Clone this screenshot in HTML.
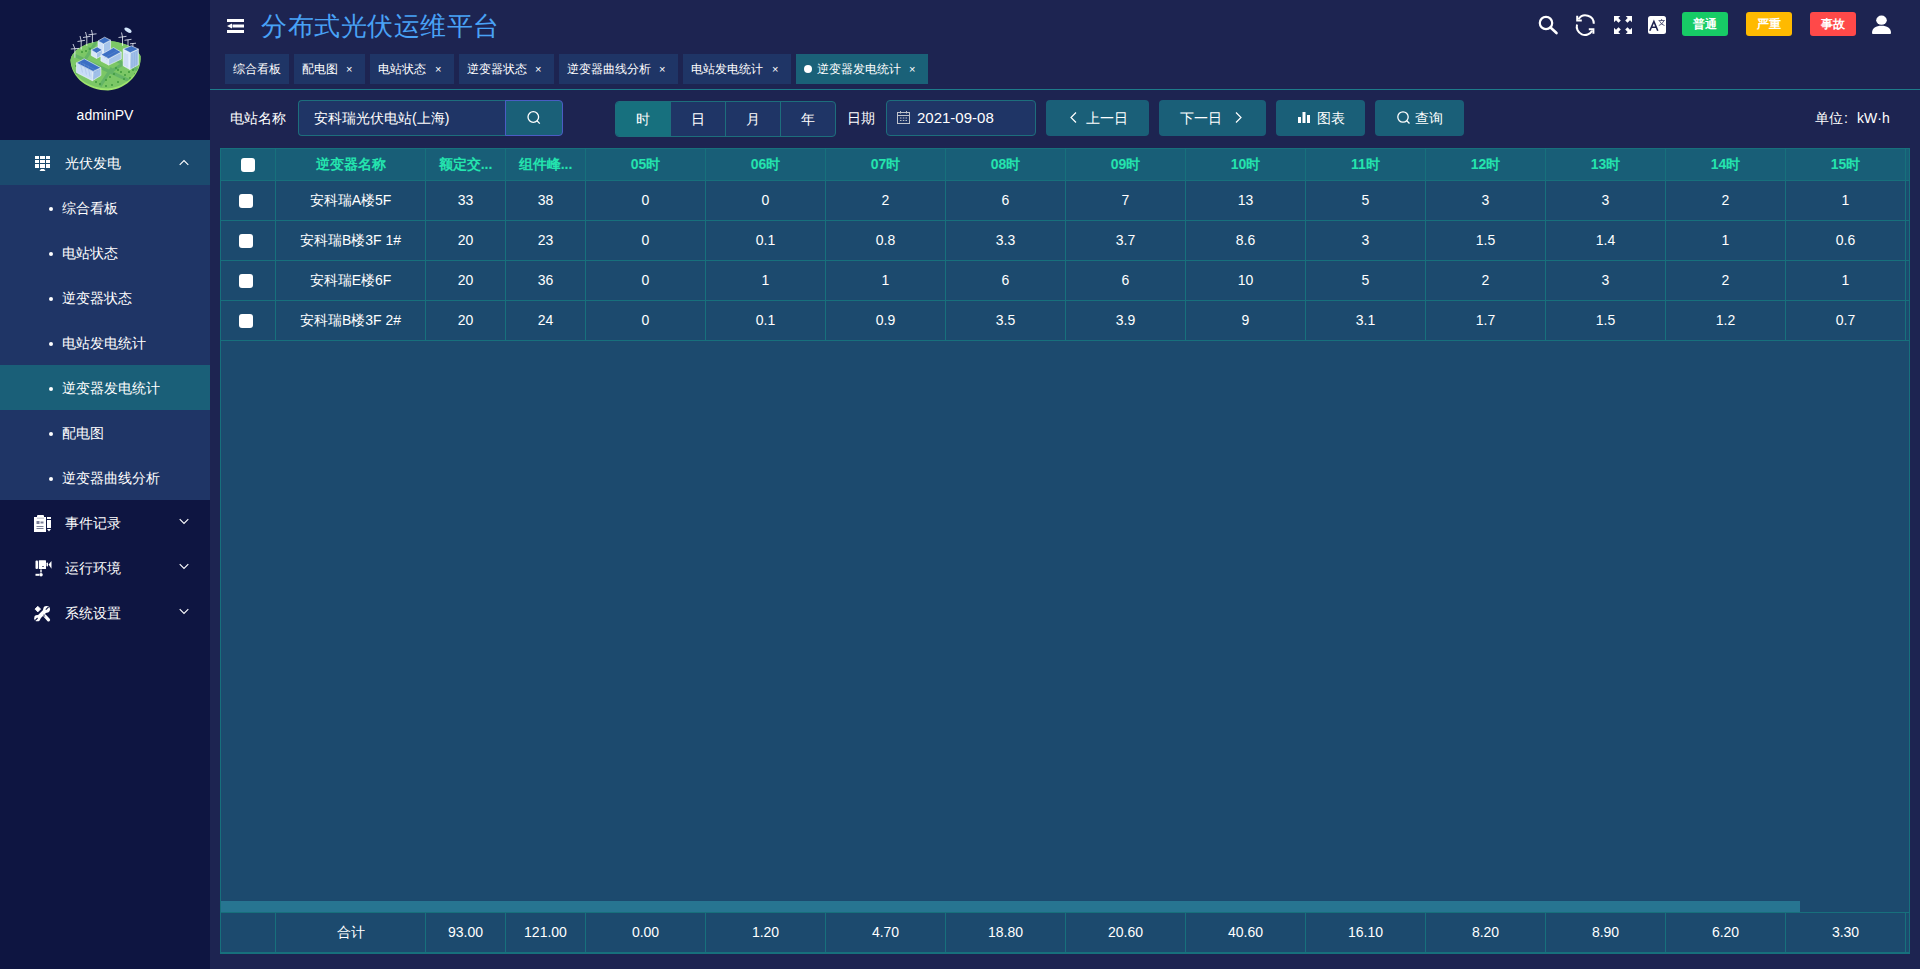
<!DOCTYPE html>
<html><head><meta charset="utf-8"><style>
*{box-sizing:border-box;margin:0;padding:0}
html,body{width:1920px;height:969px;overflow:hidden;background:#1d2451;font-family:"Liberation Sans",sans-serif;color:#fff}
.a{position:absolute}
svg{position:absolute;overflow:visible}
.txt{position:absolute;white-space:nowrap;font-size:14px;line-height:20px}
.m{position:absolute;left:0;width:210px;height:45px;font-size:14px;line-height:45px}
.m .t{position:absolute;left:65px;top:1px}
.sub{position:absolute;left:0;width:210px;height:45px;font-size:14px;line-height:45px;background:#1f3566}
.sub .dot{position:absolute;left:49px;top:22px;width:4px;height:4px;border-radius:50%;background:#fff}
.sub .t{position:absolute;left:62px;top:1px}
.sub.act{background:#1a5f78}
.tab{position:absolute;top:54px;height:30px;background:#1f3566;font-size:12px;line-height:30px;padding-left:8px;white-space:nowrap}
.tab .x{position:absolute;top:0;font-size:11px}
.tab.act{background:#1a6178}
.btn{position:absolute;top:100px;height:36px;background:#1a5f78;border-radius:4px;font-size:14px;line-height:36px;white-space:nowrap}
.cell{position:absolute;text-align:center;font-size:14px;white-space:nowrap;padding-left:1px}
.hd{color:#24e4ae;font-weight:bold;font-size:14px}
.vl{position:absolute;width:1px;background:#17707c}
.hl{position:absolute;height:1px;background:#17707c}
.cb{position:absolute;width:14px;height:14px;background:#fff;border-radius:3px}
.badge{position:absolute;top:12px;width:46px;height:24px;border-radius:3px;font-size:12px;line-height:25px;text-align:center;font-weight:bold}
</style></head><body>
<div class="a" style="left:0;top:0;width:210px;height:969px;background:#0e1541"></div>
<svg style="left:66px;top:22px" width="78" height="72" viewBox="0 0 78 72">
<path d="M4.5 38 C6 28 20 20 36 19 C52 18 70 24 74.5 34 C76 50 62 67 42 68.5 C22 68.5 5 56 4.5 38Z" fill="#9ee46e"/>
<path d="M4.5 38 C6 28 20 20 36 19 C52 18 70 24 74.5 34 C75.5 49 61 65 42 66.5 C23 66.5 6 55 4.5 38Z" fill="#7cc766"/>
<clipPath id="isl"><path d="M4.5 38 C6 28 20 20 36 19 C52 18 70 24 74.5 34 C75.5 49 61 65 42 66.5 C23 66.5 6 55 4.5 38Z"/></clipPath><g clip-path="url(#isl)"><path d="M8 33 L66 60 M30 20 L10 52 M46 46 L34 64 M60 40 L44 50 M22 26 L72 48" stroke="#64b466" stroke-width="3.2" fill="none"/>
<circle cx="10" cy="44" r="1" fill="#3f9a3c"/><circle cx="14" cy="47" r="1" fill="#3f9a3c"/><circle cx="18" cy="50" r="1" fill="#3f9a3c"/><circle cx="22" cy="53" r="1" fill="#3f9a3c"/><circle cx="27" cy="56" r="1" fill="#3f9a3c"/><circle cx="30" cy="60" r="1" fill="#3f9a3c"/><circle cx="34" cy="62" r="1" fill="#3f9a3c"/><circle cx="40" cy="58" r="1" fill="#3f9a3c"/><circle cx="44" cy="55" r="1" fill="#3f9a3c"/><circle cx="48" cy="52" r="1" fill="#3f9a3c"/><circle cx="52" cy="48" r="1" fill="#3f9a3c"/><circle cx="50" cy="46" r="1" fill="#3f9a3c"/><circle cx="55" cy="50" r="1" fill="#3f9a3c"/><circle cx="59" cy="53" r="1" fill="#3f9a3c"/><circle cx="63" cy="50" r="1" fill="#3f9a3c"/><circle cx="67" cy="48" r="1" fill="#3f9a3c"/><circle cx="58" cy="57" r="1" fill="#3f9a3c"/><circle cx="52" cy="60" r="1" fill="#3f9a3c"/><circle cx="46" cy="63" r="1" fill="#3f9a3c"/><circle cx="40" cy="64" r="1" fill="#3f9a3c"/><circle cx="64" cy="56" r="1" fill="#3f9a3c"/><circle cx="69" cy="52" r="1" fill="#3f9a3c"/><circle cx="16" cy="30" r="1" fill="#3f9a3c"/><circle cx="20" cy="29" r="1" fill="#3f9a3c"/><circle cx="24" cy="27" r="1" fill="#3f9a3c"/></g>
<g stroke="#f4f8ff" stroke-width="0.6" stroke-linejoin="round">
<path d="M10.4 40.9 L27.1 49.4 L26.4 58.7 L10.4 50.5Z" fill="#c9ddf6"/>
<path d="M27.1 49.4 L34.9 45.7 L34.9 53.5 L26.4 58.7Z" fill="#9fbfe8"/>
<path d="M10.4 40.9 L18.2 36.8 L34.9 45.7 L27.1 49.4Z" fill="#3b6fc4"/>
<path d="M32 19 L37.5 21.9 L37.5 33 L32 30Z" fill="#cfe1f8"/>
<path d="M37.5 21.9 L44.6 18.2 L44.6 30 L37.5 33Z" fill="#a6c4ea"/>
<path d="M32 19 L38.6 15.2 L44.6 18.2 L37.5 21.9Z" fill="#3b6fc4"/>
<path d="M25.3 27.9 L30.5 31.2 L30.5 36.4 L25.3 33.5Z" fill="#d6e6fa"/>
<path d="M30.5 31.2 L36.4 27.9 L36.4 33.5 L30.5 36.4Z" fill="#a6c4ea"/>
<path d="M25.3 27.9 L31.2 24.9 L36.4 27.9 L30.5 31.2Z" fill="#3b6fc4"/>
<path d="M34.9 32.7 L42.7 36.8 L42.7 43.1 L34.9 39Z" fill="#d6e6fa"/>
<path d="M42.7 36.8 L55.3 30.1 L55.3 37.1 L42.7 43.1Z" fill="#a6c4ea"/>
<path d="M34.9 32.7 L47.5 25.6 L55.3 30.1 L42.7 36.8Z" fill="#3b6fc4"/>
<path d="M57.2 27.1 L64.3 30.8 L63.9 47.5 L57.2 43.8Z" fill="#dbe9fb"/>
<path d="M64.3 30.8 L72.4 27.1 L72.4 42.7 L63.9 47.5Z" fill="#9fbfe8"/>
<path d="M57.2 27.1 L65.4 23.8 L72.4 27.1 L64.3 30.8Z" fill="#3b6fc4"/>
</g>
<g stroke="#eef3fa" stroke-width="0.8" fill="none">
<path d="M8.9 35.7 L8.9 26.7 M4.8 27 L13 26.4 M8.9 26.7 L7 22"/>
<path d="M15.2 27.5 L15.2 18.9 M11.5 19.5 L19 18.3 M15.2 18.9 L14 14"/>
<path d="M20.8 23.8 L20.8 14.9 M17 15.5 L24.5 14.3 M20.8 14.9 L19.5 10"/>
<path d="M26.4 20.8 L26.4 12.3 M22.5 12.8 L30.5 11.8 M26.4 12.3 L25.5 8"/>
<path d="M56.5 23.8 L56.5 14.9 M52.5 15.5 L60.5 14.3 M56.5 14.9 L55.5 10.5"/>
<path d="M62 23.8 L62 17.8 M58.5 18.3 L65.5 17.3"/>
<path d="M66.9 24.5 L66.9 21.5 M64 21.8 L70 21.2"/>
</g>
<ellipse cx="62" cy="8.2" rx="4" ry="1.9" fill="#d3e6fb" transform="rotate(32 62 8.2)"/>
<g stroke="#7fa3da" stroke-width="0.35" fill="none" opacity="0.8">
<path d="M13 42.2 L29.5 50.5 M15.5 40.9 L32 49.2 M14 39.5 L16.5 50.5 M18 41.5 L20.5 52.5 M22 43.5 L24 54.5"/>
<path d="M59 31 L59 44 M61 32 L61 45.5 M66 31 L66 47 M68.5 30 L68.5 45.5 M70.5 29 L70.5 44"/>
<path d="M38 36 L51 29 M40 37.5 L53 30.5"/>
</g>
</svg>
<div class="txt" style="left:0;width:210px;top:105px;text-align:center">adminPV</div>
<div class="m" style="top:140px;background:#1b4a6e"><span class="t">光伏发电</span></div>
<svg style="left:35px;top:156px" width="15" height="15" viewBox="0 0 15 15" fill="#fff">
<rect x="0" y="0" width="4" height="3"/><rect x="5" y="0" width="5" height="3"/><rect x="11" y="0" width="4" height="3"/>
<rect x="0" y="4" width="4" height="3"/><rect x="5" y="4" width="5" height="3"/><rect x="11" y="4" width="4" height="3"/>
<rect x="0" y="8" width="4" height="4"/><rect x="5" y="8" width="5" height="4"/><rect x="11" y="8" width="4" height="4"/>
<path d="M6 13 L9 13 L10.5 15 L4.5 15Z"/></svg>
<svg style="left:179px;top:159px" width="10" height="7" viewBox="0 0 10 7"><path d="M0.7 5.8 L5 1.5 L9.3 5.8" stroke="#fff" stroke-width="1.1" fill="none"/></svg>
<div class="sub" style="top:185px"><i class="dot"></i><span class="t">综合看板</span></div>
<div class="sub" style="top:230px"><i class="dot"></i><span class="t">电站状态</span></div>
<div class="sub" style="top:275px"><i class="dot"></i><span class="t">逆变器状态</span></div>
<div class="sub" style="top:320px"><i class="dot"></i><span class="t">电站发电统计</span></div>
<div class="sub act" style="top:365px"><i class="dot"></i><span class="t">逆变器发电统计</span></div>
<div class="sub" style="top:410px"><i class="dot"></i><span class="t">配电图</span></div>
<div class="sub" style="top:455px"><i class="dot"></i><span class="t">逆变器曲线分析</span></div>
<div class="m" style="top:500px"><span class="t">事件记录</span></div>
<svg style="left:179px;top:518px" width="10" height="7" viewBox="0 0 10 7"><path d="M0.7 1.2 L5 5.5 L9.3 1.2" stroke="#fff" stroke-width="1.1" fill="none"/></svg>
<div class="m" style="top:545px"><span class="t">运行环境</span></div>
<svg style="left:179px;top:563px" width="10" height="7" viewBox="0 0 10 7"><path d="M0.7 1.2 L5 5.5 L9.3 1.2" stroke="#fff" stroke-width="1.1" fill="none"/></svg>
<div class="m" style="top:590px"><span class="t">系统设置</span></div>
<svg style="left:179px;top:608px" width="10" height="7" viewBox="0 0 10 7"><path d="M0.7 1.2 L5 5.5 L9.3 1.2" stroke="#fff" stroke-width="1.1" fill="none"/></svg>
<svg style="left:34px;top:515px" width="17" height="17" viewBox="0 0 17 17" fill="#fff">
<path d="M0 2 L3 2 L3 1 Q3 0 4 0 L9 0 Q10 0 10 1 L10 2 L12 2 L12 17 L0 17Z"/>
<rect x="2.5" y="6" width="3" height="3" fill="#0e1541" opacity="0.55"/><rect x="6.5" y="6.5" width="3" height="2" fill="#0e1541" opacity="0.55"/>
<rect x="2.5" y="11" width="7" height="1" fill="#0e1541" opacity="0.55"/><rect x="2.5" y="13" width="7" height="1" fill="#0e1541" opacity="0.55"/>
<path d="M3 3.2 L10 3.2" stroke="#0e1541" stroke-width="0.6" opacity="0.5"/>
<rect x="13" y="2" width="4" height="2"/><rect x="13" y="5" width="4" height="8"/><path d="M13 14 L17 14 L15 16.5Z"/></svg>
<svg style="left:35px;top:560px" width="17" height="17" viewBox="0 0 17 17" fill="#fff">
<rect x="0.5" y="0.5" width="2.5" height="8.5" rx="1"/><rect x="3.8" y="0.3" width="7.2" height="8.7" rx="0.5"/>
<rect x="7" y="6" width="2" height="1" fill="#0e1541" opacity="0.6"/>
<rect x="11.5" y="2.5" width="1.5" height="4" rx="0.7"/><path d="M13.5 4.5 L16.5 1 L16.5 8.7Z"/>
<rect x="5.3" y="9.5" width="1.4" height="3"/><circle cx="6" cy="14.8" r="1.8"/><rect x="0.5" y="13.8" width="3.5" height="2"/></svg>
<svg style="left:34px;top:605px" width="16" height="17" viewBox="0 0 16 17">
<path d="M3.8 1.3 L6.6 4.1 L3.8 6.9 L1 4.1Z" fill="#fff" stroke="#fff" stroke-width="0.8" stroke-linejoin="round"/>
<path d="M3 14 L12.5 4.5" stroke="#fff" stroke-width="4" stroke-linecap="round"/>
<circle cx="12.6" cy="4.3" r="3.4" fill="#fff"/><circle cx="3.3" cy="13.2" r="3.1" fill="#fff"/>
<path d="M14.6 1.8 L11.8 4.6" stroke="#0e1541" stroke-width="1.1"/>
<path d="M1 15.6 L3.6 13" stroke="#0e1541" stroke-width="1.1"/>
<path d="M11 11 L14.5 14.8" stroke="#fff" stroke-width="3.2" stroke-linecap="round"/>
<path d="M9.5 10 L11.2 11.6" stroke="#0e1541" stroke-width="0.9"/>
</svg>
<svg style="left:227px;top:19px" width="17" height="14" viewBox="0 0 17 14" fill="#fff">
<rect x="0" y="0" width="17" height="3"/><rect x="5.5" y="5.5" width="11.5" height="3"/><rect x="0" y="11" width="17" height="3"/>
<path d="M0 7 L5 4.5 L5 9.5Z"/></svg>
<div class="txt" style="left:261px;top:8px;font-size:26px;letter-spacing:0.5px;line-height:36px;color:#49a2f6">分布式光伏运维平台</div>
<svg style="left:1538px;top:15px" width="20" height="20" viewBox="0 0 20 20"><circle cx="8" cy="8" r="6.2" stroke="#fff" stroke-width="2.2" fill="none"/><path d="M12.5 12.5 L18.5 18" stroke="#fff" stroke-width="2.6" stroke-linecap="round"/></svg>
<svg style="left:1575px;top:14px" width="21" height="21" viewBox="0 0 21 21" fill="none" stroke="#fff" stroke-width="2">
<path d="M3.5 5.2 A8.3 8.3 0 0 1 18.8 9.8"/><path d="M17.2 16.8 A8.3 8.3 0 0 1 2 10.5"/>
<path d="M2.2 1.8 L2.2 6.4 L6.8 6.4" stroke-width="2"/><path d="M18.4 19.8 L18.4 15.2 L13.8 15.2" stroke-width="2"/></svg>
<svg style="left:1614px;top:16px" width="18" height="18" viewBox="0 0 18 18" fill="#fff">
<path d="M0 0 L6.3 0 L4.3 2 L6.8 4.5 L4.5 6.8 L2 4.3 L0 6.3Z"/>
<path d="M18 0 L11.7 0 L13.7 2 L11.2 4.5 L13.5 6.8 L16 4.3 L18 6.3Z"/>
<path d="M0 18 L6.3 18 L4.3 16 L6.8 13.5 L4.5 11.2 L2 13.7 L0 11.7Z"/>
<path d="M18 18 L11.7 18 L13.7 16 L11.2 13.5 L13.5 11.2 L16 13.7 L18 11.7Z"/></svg>
<svg style="left:1648px;top:16px" width="18" height="18" viewBox="0 0 18 18">
<rect x="0" y="0" width="18" height="18" rx="2.5" fill="#fff"/>
<path d="M1.8 14.8 L5.9 5.5 L9.8 14.8 M3.3 11.3 L8.4 11.3" stroke="#1e2350" stroke-width="1.6" fill="none"/>
<path d="M10.5 4.5 L16.8 4.5 M13.6 3 L13.6 4.5 M11.5 5 Q13.5 9 16.5 9.5 M15.8 5 Q13.8 9 10.8 9.5" stroke="#1e2350" stroke-width="0.7" fill="none"/></svg>
<div class="badge" style="left:1682px;background:#17cc66">普通</div>
<div class="badge" style="left:1746px;background:#ffba00">严重</div>
<div class="badge" style="left:1810px;background:#ff4949">事故</div>
<svg style="left:1872px;top:15px" width="19" height="20" viewBox="0 0 19 20" fill="#fff">
<ellipse cx="9.5" cy="5.2" rx="5.3" ry="4.6"/><path d="M0 18 C0 13 4 10.8 9.5 10.8 C15 10.8 19 13 19 18 Q19 19 18 19 L1 19 Q0 19 0 18Z"/></svg>
<div class="tab" style="left:225px;width:64px">综合看板</div>
<div class="tab" style="left:294px;width:71px">配电图<span class="x" style="left:52px">×</span></div>
<div class="tab" style="left:370px;width:84px">电站状态<span class="x" style="left:65px">×</span></div>
<div class="tab" style="left:459px;width:95px">逆变器状态<span class="x" style="left:76px">×</span></div>
<div class="tab" style="left:559px;width:119px">逆变器曲线分析<span class="x" style="left:100px">×</span></div>
<div class="tab" style="left:683px;width:108px">电站发电统计<span class="x" style="left:89px">×</span></div>
<div class="tab act" style="left:796px;width:132px;padding-left:21px"><i class="a" style="left:8px;top:11px;width:8px;height:8px;border-radius:50%;background:#fff"></i>逆变器发电统计<span class="x" style="left:113px">×</span></div>
<div class="a" style="left:210px;top:89px;width:1710px;height:1px;background:#1e7b8a"></div>
<div class="txt" style="left:230px;top:108px">电站名称</div>
<div class="a" style="left:298px;top:100px;width:208px;height:36px;background:#1f3566;border:1px solid #1d6e7c;border-right:none;border-radius:4px 0 0 4px;font-size:14px;line-height:34px;padding-left:15px;white-space:nowrap">安科瑞光伏电站(上海)</div>
<div class="a" style="left:505px;top:100px;width:58px;height:36px;background:#1a6078;border:1px solid #4b5cc4;border-radius:0 4px 4px 0"></div>
<svg style="left:527px;top:111px" width="14" height="14" viewBox="0 0 14 14" fill="none" stroke="#fff" stroke-width="1.3"><circle cx="6.3" cy="6" r="5.3"/><path d="M10 9.8 L12.8 12.6"/></svg>
<div class="a" style="left:615px;top:101px;width:221px;height:36px;background:#1f3566;border:1px solid #1d6e7c;border-radius:4px;overflow:hidden"><div class="a" style="left:0;top:0;width:55px;height:34px;background:#17707e"></div></div>
<i class="a" style="left:670px;top:102px;width:1px;height:34px;background:#1d6e7c"></i>
<i class="a" style="left:725px;top:102px;width:1px;height:34px;background:#1d6e7c"></i>
<i class="a" style="left:780px;top:102px;width:1px;height:34px;background:#1d6e7c"></i>
<div class="txt" style="left:615px;width:55px;top:109px;text-align:center">时</div>
<div class="txt" style="left:670px;width:55px;top:109px;text-align:center">日</div>
<div class="txt" style="left:725px;width:55px;top:109px;text-align:center">月</div>
<div class="txt" style="left:780px;width:55px;top:109px;text-align:center">年</div>
<div class="txt" style="left:847px;top:108px">日期</div>
<div class="a" style="left:886px;top:100px;width:150px;height:36px;background:#1f3566;border:1px solid #1d6e7c;border-radius:4px;font-size:15px;line-height:34px;padding-left:30px">2021-09-08</div>
<svg style="left:897px;top:111px" width="13" height="13" viewBox="0 0 13 13" fill="none" stroke="#c0c4cc" stroke-width="1">
<rect x="0.5" y="1.5" width="12" height="11"/><path d="M0.5 4.5 L12.5 4.5 M3.5 0 L3.5 2.5 M9.5 0 L9.5 2.5"/>
<path d="M3 7 L4.5 7 M5.8 7 L7.3 7 M8.5 7 L10 7 M3 9.5 L4.5 9.5 M5.8 9.5 L7.3 9.5 M8.5 9.5 L10 9.5" stroke-width="1"/></svg>
<div class="btn" style="left:1046px;width:103px;padding-left:40px">上一日</div>
<svg style="left:1070px;top:112px" width="7" height="11" viewBox="0 0 7 11"><path d="M6 0.5 L1 5.5 L6 10.5" stroke="#fff" stroke-width="1.2" fill="none"/></svg>
<div class="btn" style="left:1159px;width:107px;padding-left:21px">下一日</div>
<svg style="left:1235px;top:112px" width="7" height="11" viewBox="0 0 7 11"><path d="M1 0.5 L6 5.5 L1 10.5" stroke="#fff" stroke-width="1.2" fill="none"/></svg>
<div class="btn" style="left:1276px;width:89px;padding-left:41px">图表</div>
<svg style="left:1298px;top:112px" width="12" height="11" viewBox="0 0 12 11" fill="#fff"><rect x="0" y="5" width="3" height="6"/><rect x="4.5" y="0" width="3" height="11"/><rect x="9" y="3" width="3" height="8"/></svg>
<div class="btn" style="left:1375px;width:89px;padding-left:40px">查询</div>
<svg style="left:1397px;top:111px" width="14" height="14" viewBox="0 0 14 14" fill="none" stroke="#fff" stroke-width="1.3"><circle cx="6" cy="6" r="5.2"/><path d="M9.8 9.8 L12.5 12.5"/></svg>
<div class="txt" style="left:1815px;top:108px">单位</div><div class="txt" style="left:1844px;top:108px">:</div><div class="txt" style="left:1857px;top:108px">kW·h</div>
<div class="a" style="left:220px;top:148px;width:1690px;height:32px;background:#185e77"></div>
<div class="a" style="left:220px;top:180px;width:1690px;height:773px;background:#1c4a6e"></div>
<i class="cb" style="left:241px;top:158px"></i>
<div class="cell hd" style="left:275px;width:150px;top:148px;height:33px;line-height:33px">逆变器名称</div>
<div class="cell hd" style="left:425px;width:80px;top:148px;height:33px;line-height:33px">额定交...</div>
<div class="cell hd" style="left:505px;width:80px;top:148px;height:33px;line-height:33px">组件峰...</div>
<div class="cell hd" style="left:585px;width:120px;top:148px;height:33px;line-height:33px">05时</div>
<div class="cell hd" style="left:705px;width:120px;top:148px;height:33px;line-height:33px">06时</div>
<div class="cell hd" style="left:825px;width:120px;top:148px;height:33px;line-height:33px">07时</div>
<div class="cell hd" style="left:945px;width:120px;top:148px;height:33px;line-height:33px">08时</div>
<div class="cell hd" style="left:1065px;width:120px;top:148px;height:33px;line-height:33px">09时</div>
<div class="cell hd" style="left:1185px;width:120px;top:148px;height:33px;line-height:33px">10时</div>
<div class="cell hd" style="left:1305px;width:120px;top:148px;height:33px;line-height:33px">11时</div>
<div class="cell hd" style="left:1425px;width:120px;top:148px;height:33px;line-height:33px">12时</div>
<div class="cell hd" style="left:1545px;width:120px;top:148px;height:33px;line-height:33px">13时</div>
<div class="cell hd" style="left:1665px;width:120px;top:148px;height:33px;line-height:33px">14时</div>
<div class="cell hd" style="left:1785px;width:120px;top:148px;height:33px;line-height:33px">15时</div>
<i class="cb" style="left:239px;top:194px"></i>
<div class="cell" style="left:275px;width:150px;top:181px;height:40px;line-height:38px">安科瑞A楼5F</div>
<div class="cell" style="left:425px;width:80px;top:181px;height:40px;line-height:38px">33</div>
<div class="cell" style="left:505px;width:80px;top:181px;height:40px;line-height:38px">38</div>
<div class="cell" style="left:585px;width:120px;top:181px;height:40px;line-height:38px">0</div>
<div class="cell" style="left:705px;width:120px;top:181px;height:40px;line-height:38px">0</div>
<div class="cell" style="left:825px;width:120px;top:181px;height:40px;line-height:38px">2</div>
<div class="cell" style="left:945px;width:120px;top:181px;height:40px;line-height:38px">6</div>
<div class="cell" style="left:1065px;width:120px;top:181px;height:40px;line-height:38px">7</div>
<div class="cell" style="left:1185px;width:120px;top:181px;height:40px;line-height:38px">13</div>
<div class="cell" style="left:1305px;width:120px;top:181px;height:40px;line-height:38px">5</div>
<div class="cell" style="left:1425px;width:120px;top:181px;height:40px;line-height:38px">3</div>
<div class="cell" style="left:1545px;width:120px;top:181px;height:40px;line-height:38px">3</div>
<div class="cell" style="left:1665px;width:120px;top:181px;height:40px;line-height:38px">2</div>
<div class="cell" style="left:1785px;width:120px;top:181px;height:40px;line-height:38px">1</div>
<i class="cb" style="left:239px;top:234px"></i>
<div class="cell" style="left:275px;width:150px;top:221px;height:40px;line-height:38px">安科瑞B楼3F 1#</div>
<div class="cell" style="left:425px;width:80px;top:221px;height:40px;line-height:38px">20</div>
<div class="cell" style="left:505px;width:80px;top:221px;height:40px;line-height:38px">23</div>
<div class="cell" style="left:585px;width:120px;top:221px;height:40px;line-height:38px">0</div>
<div class="cell" style="left:705px;width:120px;top:221px;height:40px;line-height:38px">0.1</div>
<div class="cell" style="left:825px;width:120px;top:221px;height:40px;line-height:38px">0.8</div>
<div class="cell" style="left:945px;width:120px;top:221px;height:40px;line-height:38px">3.3</div>
<div class="cell" style="left:1065px;width:120px;top:221px;height:40px;line-height:38px">3.7</div>
<div class="cell" style="left:1185px;width:120px;top:221px;height:40px;line-height:38px">8.6</div>
<div class="cell" style="left:1305px;width:120px;top:221px;height:40px;line-height:38px">3</div>
<div class="cell" style="left:1425px;width:120px;top:221px;height:40px;line-height:38px">1.5</div>
<div class="cell" style="left:1545px;width:120px;top:221px;height:40px;line-height:38px">1.4</div>
<div class="cell" style="left:1665px;width:120px;top:221px;height:40px;line-height:38px">1</div>
<div class="cell" style="left:1785px;width:120px;top:221px;height:40px;line-height:38px">0.6</div>
<i class="cb" style="left:239px;top:274px"></i>
<div class="cell" style="left:275px;width:150px;top:261px;height:40px;line-height:38px">安科瑞E楼6F</div>
<div class="cell" style="left:425px;width:80px;top:261px;height:40px;line-height:38px">20</div>
<div class="cell" style="left:505px;width:80px;top:261px;height:40px;line-height:38px">36</div>
<div class="cell" style="left:585px;width:120px;top:261px;height:40px;line-height:38px">0</div>
<div class="cell" style="left:705px;width:120px;top:261px;height:40px;line-height:38px">1</div>
<div class="cell" style="left:825px;width:120px;top:261px;height:40px;line-height:38px">1</div>
<div class="cell" style="left:945px;width:120px;top:261px;height:40px;line-height:38px">6</div>
<div class="cell" style="left:1065px;width:120px;top:261px;height:40px;line-height:38px">6</div>
<div class="cell" style="left:1185px;width:120px;top:261px;height:40px;line-height:38px">10</div>
<div class="cell" style="left:1305px;width:120px;top:261px;height:40px;line-height:38px">5</div>
<div class="cell" style="left:1425px;width:120px;top:261px;height:40px;line-height:38px">2</div>
<div class="cell" style="left:1545px;width:120px;top:261px;height:40px;line-height:38px">3</div>
<div class="cell" style="left:1665px;width:120px;top:261px;height:40px;line-height:38px">2</div>
<div class="cell" style="left:1785px;width:120px;top:261px;height:40px;line-height:38px">1</div>
<i class="cb" style="left:239px;top:314px"></i>
<div class="cell" style="left:275px;width:150px;top:301px;height:40px;line-height:38px">安科瑞B楼3F 2#</div>
<div class="cell" style="left:425px;width:80px;top:301px;height:40px;line-height:38px">20</div>
<div class="cell" style="left:505px;width:80px;top:301px;height:40px;line-height:38px">24</div>
<div class="cell" style="left:585px;width:120px;top:301px;height:40px;line-height:38px">0</div>
<div class="cell" style="left:705px;width:120px;top:301px;height:40px;line-height:38px">0.1</div>
<div class="cell" style="left:825px;width:120px;top:301px;height:40px;line-height:38px">0.9</div>
<div class="cell" style="left:945px;width:120px;top:301px;height:40px;line-height:38px">3.5</div>
<div class="cell" style="left:1065px;width:120px;top:301px;height:40px;line-height:38px">3.9</div>
<div class="cell" style="left:1185px;width:120px;top:301px;height:40px;line-height:38px">9</div>
<div class="cell" style="left:1305px;width:120px;top:301px;height:40px;line-height:38px">3.1</div>
<div class="cell" style="left:1425px;width:120px;top:301px;height:40px;line-height:38px">1.7</div>
<div class="cell" style="left:1545px;width:120px;top:301px;height:40px;line-height:38px">1.5</div>
<div class="cell" style="left:1665px;width:120px;top:301px;height:40px;line-height:38px">1.2</div>
<div class="cell" style="left:1785px;width:120px;top:301px;height:40px;line-height:38px">0.7</div>
<div class="cell" style="left:275px;width:150px;top:912px;height:41px;line-height:40px">合计</div>
<div class="cell" style="left:425px;width:80px;top:912px;height:41px;line-height:40px">93.00</div>
<div class="cell" style="left:505px;width:80px;top:912px;height:41px;line-height:40px">121.00</div>
<div class="cell" style="left:585px;width:120px;top:912px;height:41px;line-height:40px">0.00</div>
<div class="cell" style="left:705px;width:120px;top:912px;height:41px;line-height:40px">1.20</div>
<div class="cell" style="left:825px;width:120px;top:912px;height:41px;line-height:40px">4.70</div>
<div class="cell" style="left:945px;width:120px;top:912px;height:41px;line-height:40px">18.80</div>
<div class="cell" style="left:1065px;width:120px;top:912px;height:41px;line-height:40px">20.60</div>
<div class="cell" style="left:1185px;width:120px;top:912px;height:41px;line-height:40px">40.60</div>
<div class="cell" style="left:1305px;width:120px;top:912px;height:41px;line-height:40px">16.10</div>
<div class="cell" style="left:1425px;width:120px;top:912px;height:41px;line-height:40px">8.20</div>
<div class="cell" style="left:1545px;width:120px;top:912px;height:41px;line-height:40px">8.90</div>
<div class="cell" style="left:1665px;width:120px;top:912px;height:41px;line-height:40px">6.20</div>
<div class="cell" style="left:1785px;width:120px;top:912px;height:41px;line-height:40px">3.30</div>
<i class="vl" style="left:275px;top:148px;height:193px"></i>
<i class="vl" style="left:275px;top:912px;height:41px"></i>
<i class="vl" style="left:425px;top:148px;height:193px"></i>
<i class="vl" style="left:425px;top:912px;height:41px"></i>
<i class="vl" style="left:505px;top:148px;height:193px"></i>
<i class="vl" style="left:505px;top:912px;height:41px"></i>
<i class="vl" style="left:585px;top:148px;height:193px"></i>
<i class="vl" style="left:585px;top:912px;height:41px"></i>
<i class="vl" style="left:705px;top:148px;height:193px"></i>
<i class="vl" style="left:705px;top:912px;height:41px"></i>
<i class="vl" style="left:825px;top:148px;height:193px"></i>
<i class="vl" style="left:825px;top:912px;height:41px"></i>
<i class="vl" style="left:945px;top:148px;height:193px"></i>
<i class="vl" style="left:945px;top:912px;height:41px"></i>
<i class="vl" style="left:1065px;top:148px;height:193px"></i>
<i class="vl" style="left:1065px;top:912px;height:41px"></i>
<i class="vl" style="left:1185px;top:148px;height:193px"></i>
<i class="vl" style="left:1185px;top:912px;height:41px"></i>
<i class="vl" style="left:1305px;top:148px;height:193px"></i>
<i class="vl" style="left:1305px;top:912px;height:41px"></i>
<i class="vl" style="left:1425px;top:148px;height:193px"></i>
<i class="vl" style="left:1425px;top:912px;height:41px"></i>
<i class="vl" style="left:1545px;top:148px;height:193px"></i>
<i class="vl" style="left:1545px;top:912px;height:41px"></i>
<i class="vl" style="left:1665px;top:148px;height:193px"></i>
<i class="vl" style="left:1665px;top:912px;height:41px"></i>
<i class="vl" style="left:1785px;top:148px;height:193px"></i>
<i class="vl" style="left:1785px;top:912px;height:41px"></i>
<i class="vl" style="left:1905px;top:148px;height:193px"></i>
<i class="vl" style="left:1905px;top:912px;height:41px"></i>
<i class="hl" style="left:220px;top:180px;width:1690px"></i>
<i class="hl" style="left:220px;top:220px;width:1690px"></i>
<i class="hl" style="left:220px;top:260px;width:1690px"></i>
<i class="hl" style="left:220px;top:300px;width:1690px"></i>
<i class="hl" style="left:220px;top:340px;width:1690px"></i>
<i class="hl" style="left:220px;top:912px;width:1690px"></i>
<i class="hl" style="left:220px;top:952px;width:1690px"></i>
<div class="a" style="left:220px;top:148px;width:1690px;height:806px;border:1px solid #17707c"></div>
<div class="a" style="left:221px;top:901px;width:1579px;height:11px;background:#277591"></div>
</body></html>
